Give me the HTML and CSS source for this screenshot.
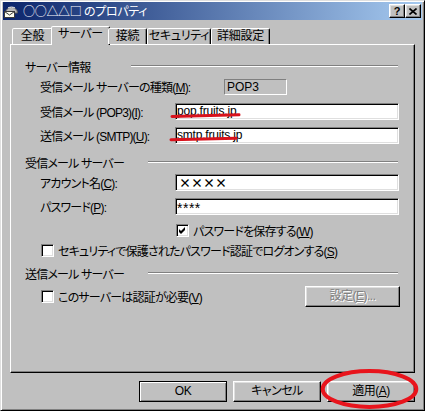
FILE: index.html
```html
<!DOCTYPE html>
<html lang="ja">
<head>
<meta charset="utf-8">
<title>○○△△□ のプロパティ</title>
<link rel="stylesheet" href="styles.css">
</head>
<body>
<div class="window">
  <div class="titlebar">
    <svg class="app-icon" viewBox="0 0 16 16" width="16" height="16">
      <path d="M2.5 10 C2.5 2.5 14.5 2.5 14.5 10 Z" fill="#b8b8b8" stroke="#5a5a5a" stroke-width="1"/>
      <path d="M5 5 C7 3.8 10 3.8 12 5" fill="none" stroke="#ffffff" stroke-width="1"/>
      <rect x="1.5" y="8.5" width="10" height="6" fill="#fffff0" stroke="#3a3a3a" stroke-width="1"/>
      <path d="M1.5 8.5 L6.5 12 L11.5 8.5" fill="none" stroke="#3a3a3a" stroke-width="1"/>
    </svg>
    <span class="title">○○△△□ のプロパティ</span>
    <div class="caption-buttons">
      <span class="cap-btn help">?</span>
      <span class="cap-btn close">
        <svg viewBox="0 0 8 7" width="8" height="7"><path d="M0.5 0.5 L7.5 6.5 M7.5 0.5 L0.5 6.5" stroke="#000" stroke-width="1.6"/></svg>
      </span>
    </div>
  </div>

  <div class="tabs">
    <div class="tab tab-general">全般</div>
    <div class="tab tab-server active">サーバー</div>
    <div class="tab tab-connect">接続</div>
    <div class="tab tab-security">セキュリティ</div>
    <div class="tab tab-advanced">詳細設定</div>
  </div>

  <div class="panel">
    <div class="group-head">
      <span class="gh-text short">サーバー情報</span><span class="etch"></span>
    </div>
    <div class="field row-type">
      <span class="label">受信メール サーバーの種類(<u>M</u>):</span>
      <div class="static">POP3</div>
    </div>
    <div class="field row-pop">
      <span class="label">受信メール (POP3)(<u>I</u>):</span>
      <div class="edit">pop.fruits.jp</div>
    </div>
    <div class="field row-smtp">
      <span class="label">送信メール (SMTP)(<u>U</u>):</span>
      <div class="edit">smtp.fruits.jp</div>
    </div>

    <div class="group-head gh-incoming">
      <span class="gh-text long">受信メール サーバー</span><span class="etch"></span>
    </div>
    <div class="field row-account">
      <span class="label">アカウント名(<u>C</u>):</span>
      <div class="edit"><span class="masked">××××</span></div>
    </div>
    <div class="field row-password">
      <span class="label">パスワード(<u>P</u>):</span>
      <div class="edit"><span class="stars">****</span></div>
    </div>
    <div class="check-row row-save">
      <span class="check checked">
        <svg viewBox="0 0 9 9" width="9" height="9"><path d="M1 3 L3 5 L7 1 L7 4 L3 8 L1 6 Z" fill="#000"/></svg>
      </span>
      <span>パスワードを保存する(<u>W</u>)</span>
    </div>
    <div class="check-row row-secure">
      <span class="check"></span>
      <span>セキュリティで保護されたパスワード認証でログオンする(<u>S</u>)</span>
    </div>

    <div class="group-head gh-outgoing">
      <span class="gh-text long">送信メール サーバー</span><span class="etch"></span>
    </div>
    <div class="check-row row-auth">
      <span class="check"></span>
      <span>このサーバーは認証が必要(<u>V</u>)</span>
      <button class="btn disabled settings">設定(<u>E</u>)...</button>
    </div>
  </div>

  <div class="footer">
    <button class="btn default">OK</button>
    <button class="btn">キャンセル</button>
    <button class="btn">適用(<u>A</u>)</button>
  </div>
</div>

<svg class="annotations" width="425" height="411" viewBox="0 0 425 411">
  <path d="M172 116.5 L239 114.8" stroke="#d8121c" stroke-width="3" stroke-linecap="round" fill="none"/>
  <path d="M171 139.8 L236 138.2" stroke="#d8121c" stroke-width="3" stroke-linecap="round" fill="none"/>
  <ellipse cx="369.5" cy="389" rx="46.8" ry="18" fill="none" stroke="#e8141c" stroke-width="4"/>
</svg>
</body>
</html>
```

FILE: styles.css
```css
* { box-sizing: border-box; }

html, body {
  margin: 0;
  padding: 0;
}

body {
  position: relative;
  width: 425px;
  height: 411px;
  overflow: hidden;
  background: #c0c0c0;
  font-family: "Liberation Sans", "Noto Sans CJK JP", sans-serif;
  font-size: 12px;
  letter-spacing: -0.8px;
  color: #000;
  font-feature-settings: "palt";
}

u { text-decoration: underline; text-underline-offset: 1px; }

.window {
  width: 425px;
  height: 411px;
  background: #c0c0c0;
  border: 1px solid;
  border-color: #dfdfdf #000 #000 #dfdfdf;
  box-shadow: inset 1px 1px #fff, inset -1px -1px #808080;
  padding: 1px 2px 2px 2px;
}

/* title bar */
.titlebar {
  height: 18px;
  display: flex;
  align-items: center;
  background: linear-gradient(to right, #0a246a, #a6caf0);
  color: #fff;
  padding: 0 1px 0 0;
}

.app-icon { flex: none; }

.title {
  margin-left: 4px;
  white-space: nowrap;
  line-height: 18px;
  font-family: "Noto Sans CJK JP", sans-serif;
  letter-spacing: -0.3px;
}

.caption-buttons {
  margin-left: auto;
  display: flex;
}

.cap-btn {
  width: 16px;
  height: 14px;
  background: #c0c0c0;
  border: 1px solid;
  border-color: #fff #000 #000 #fff;
  box-shadow: inset -1px -1px #808080, inset 1px 1px #dfdfdf;
  display: flex;
  align-items: center;
  justify-content: center;
  color: #000;
  letter-spacing: 0;
}

.cap-btn.help {
  font-family: "Liberation Sans", sans-serif;
  font-weight: bold;
  font-size: 11px;
  line-height: 12px;
}

/* tabs */
.tabs {
  position: relative;
  z-index: 1;
  display: flex;
  align-items: flex-end;
  height: 18px;
  margin: 6px 0 0 7px;
  padding-left: 2px;
}

.tab {
  height: 16px;
  background: #c0c0c0;
  border: 1px solid;
  border-bottom: none;
  border-color: #fff #000 transparent #fff;
  box-shadow: inset -1px 0 #808080;
  border-radius: 2px 2px 0 0;
  text-align: center;
  line-height: 15px;
  white-space: nowrap;
  letter-spacing: -0.3px;
}

.tab.active {
  height: 19px;
  margin: 0 -2px -1px;
  line-height: 15px;
}

.tab-general { width: 41px; }
.tab-server { width: 59px; }
.tab-connect { width: 39px; }
.tab-security { width: 64px; }
.tab-advanced { width: 59px; }

/* panel */
.panel {
  margin-left: 7px;
  width: 405px;
  height: 329px;
  border: 1px solid;
  border-color: #fff #000 #000 #fff;
  box-shadow: inset -1px -1px #808080;
  padding-top: 13px;
}

.group-head {
  display: flex;
  align-items: center;
  height: 16px;
  padding: 0 16px 0 14px;
}

.gh-text { flex: none; white-space: nowrap; }
.gh-text.short { width: 106px; }
.gh-text.long { width: 123px; }

.etch {
  flex: 1;
  height: 2px;
  border-top: 1px solid #808080;
  border-bottom: 1px solid #fff;
}

.gh-incoming { margin-top: 10px; }
.gh-outgoing { margin-top: 8px; }

.field {
  display: grid;
  grid-template-columns: 135px 224px;
  align-items: center;
  padding-left: 29px;
}

.label { white-space: nowrap; }

.row-type { margin-top: 4px; }
.row-pop { margin-top: 8px; }
.row-smtp { margin-top: 7px; }
.row-account { margin-top: 4px; }
.row-password { margin-top: 7px; }

.static {
  width: 63px;
  height: 16px;
  margin-left: 49px;
  border: 1px solid;
  border-color: #808080 #fff #fff #808080;
  padding-left: 2px;
  line-height: 14px;
  letter-spacing: 0;
}

.edit {
  height: 17px;
  background: #fff;
  border: 1px solid;
  border-color: #808080 #fff #fff #808080;
  box-shadow: inset 1px 1px #000, inset -1px -1px #dfdfdf;
  padding: 0 1px;
  line-height: 15px;
  white-space: nowrap;
  overflow: hidden;
  letter-spacing: -0.2px;
}

.masked {
  font-family: "Noto Sans CJK JP", sans-serif;
  font-feature-settings: normal;
  font-weight: bold;
  padding-left: 2px;
  letter-spacing: 0;
}

.stars {
  display: inline-block;
  font-size: 14px;
  letter-spacing: 0.5px;
  vertical-align: -3px;
}

.check-row {
  display: flex;
  align-items: center;
  gap: 4px;
  height: 13px;
  white-space: nowrap;
}

.row-save { margin-top: 9px; padding-left: 165px; }
.row-secure { margin-top: 7px; padding-left: 30px; }
.row-auth { margin-top: 5px; height: 21px; padding: 0 14px 0 30px; }

.check {
  flex: none;
  width: 13px;
  height: 13px;
  background: #fff;
  border: 1px solid;
  border-color: #808080 #fff #fff #808080;
  box-shadow: inset 1px 1px #000, inset -1px -1px #dfdfdf;
  display: flex;
  align-items: center;
  justify-content: center;
}

.check svg { display: block; }

/* buttons */
.btn {
  width: 88px;
  height: 21px;
  padding: 0;
  margin: 0;
  font: inherit;
  letter-spacing: -0.5px;
  color: #000;
  background: #c0c0c0;
  border: 1px solid;
  border-color: #fff #000 #000 #fff;
  box-shadow: inset -1px -1px #808080, inset 1px 1px #dfdfdf;
  line-height: 17px;
  text-align: center;
  white-space: nowrap;
}

.btn.default {
  border-color: #000;
  box-shadow: inset 1px 1px #fff, inset -1px -1px #808080;
}

.btn.disabled {
  color: #808080;
  text-shadow: 1px 1px #fff;
}

.btn.settings {
  width: 95px;
  margin-left: auto;
}

.footer {
  display: flex;
  justify-content: flex-end;
  gap: 6px;
  width: 405px;
  margin: 8px 0 0 7px;
}

/* red annotation marks drawn over the screenshot */
.annotations {
  position: absolute;
  left: 0;
  top: 0;
  pointer-events: none;
}
```
